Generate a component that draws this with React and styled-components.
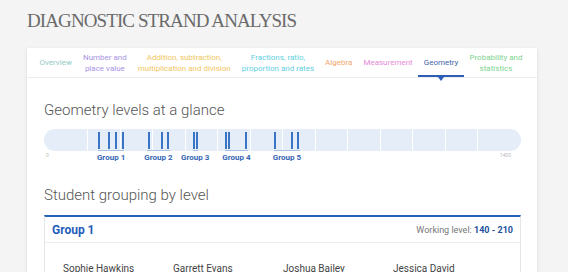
import React from 'react';
import styled, { createGlobalStyle } from 'styled-components';

const GlobalStyle = createGlobalStyle`
  body {
    margin: 0;
    background: #f4f4f4;
    font-family: Roboto, "Liberation Sans", sans-serif;
  }
`;

const tabs = [
  { lines: ['Overview'], color: '#93cbc5' },
  { lines: ['Number and', 'place value'], color: '#a893e4' },
  { lines: ['Addition, subtraction,', 'multiplication and division'], color: '#f0c65e' },
  { lines: ['Fractions, ratio,', 'proportion and rates'], color: '#62cfe2' },
  { lines: ['Algebra'], color: '#f4a66c' },
  { lines: ['Measurement'], color: '#e68bd8' },
  { lines: ['Geometry'], color: '#4565ab', active: true },
  { lines: ['Probability and', 'statistics'], color: '#80d48f' },
];

const groups = [
  { name: 'Group 1', from: 131, to: 211, ticks: [135, 165, 186, 207] },
  { name: 'Group 2', from: 282, to: 352, ticks: [288, 328, 346] },
  { name: 'Group 3', from: 423, to: 437, ticks: [426, 435] },
  { name: 'Group 4', from: 522, to: 592, ticks: [525, 535, 586] },
  { name: 'Group 5', from: 672, to: 752, ticks: [675, 727, 746] },
];

const students = ['Sophie Hawkins', 'Garrett Evans', 'Joshua Bailey', 'Jessica David'];

// bar is 477px wide, scale 0..1400 runs between the rounded caps
const pos = (v) => 11.5 + (v / 1400) * 455;

const App = () => (
  <Page>
    <GlobalStyle />
    <Title>DIAGNOSTIC STRAND ANALYSIS</Title>
    <Card>
      <TabRow>
        {tabs.map((t) => (
          <Tab key={t.lines[0]} color={t.color} $active={t.active}>
            <span>
              {t.lines.map((l, i) => (
                <React.Fragment key={l}>
                  {i > 0 && <br />}
                  {l}
                </React.Fragment>
              ))}
            </span>
          </Tab>
        ))}
      </TabRow>

      <Content>
        <SectionHeading>Geometry levels at a glance</SectionHeading>
        <Chart>
          <Bar>
            {Array.from({ length: 14 }).map((_, i) => (
              <Cell key={i} />
            ))}
            {groups.map((g) => (
              <React.Fragment key={g.name}>
                <Range style={{ left: pos(g.from), width: pos(g.to) - pos(g.from) }} />
                {g.ticks.map((v) => (
                  <Tick key={v} style={{ left: pos(v) - 1 }} />
                ))}
              </React.Fragment>
            ))}
          </Bar>
          <Scale>
            <AxisLabel>0</AxisLabel>
            <AxisLabel $end>1400</AxisLabel>
            {groups.map((g) => (
              <GroupLabel key={g.name} style={{ left: (pos(g.from) + pos(g.to)) / 2 }}>
                {g.name}
              </GroupLabel>
            ))}
          </Scale>
        </Chart>

        <SectionHeading $spaced>Student grouping by level</SectionHeading>
        <GroupBox>
          <GroupHeader>
            <GroupName>Group 1</GroupName>
            <Level>
              Working level: <strong>140 - 210</strong>
            </Level>
          </GroupHeader>
          <Names>
            {students.map((s) => (
              <Name key={s}>{s}</Name>
            ))}
          </Names>
        </GroupBox>
      </Content>
    </Card>
  </Page>
);

const Page = styled.div`
  padding: 9px 31px 0 27px;
`;

const Title = styled.h1`
  margin: 0 0 15px;
  font-family: "Liberation Serif", serif;
  font-weight: 400;
  font-size: 19px;
  line-height: 24px;
  letter-spacing: -0.9px;
  color: #6a6a6a;
`;

const Card = styled.div`
  background: #fff;
  box-shadow: 0 1px 3px rgba(0, 0, 0, 0.12);
  height: 400px;
`;

const TabRow = styled.div`
  display: flex;
  height: 29px;
  padding: 0 7px;
  border-bottom: 1px solid #ececec;
`;

const Tab = styled.div`
  position: relative;
  display: flex;
  align-items: center;
  padding: 0 5.5px;
  font-size: 8px;
  line-height: 11px;
  text-align: center;
  white-space: nowrap;
  color: ${(p) => p.color};

  ${(p) =>
    p.$active &&
    `
    &::before {
      content: '';
      position: absolute;
      left: 0;
      right: 0;
      bottom: 0;
      height: 2px;
      background: #2a5fb5;
    }
    &::after {
      content: '';
      position: absolute;
      left: 50%;
      bottom: -4px;
      margin-left: -3px;
      border-left: 3px solid transparent;
      border-right: 3px solid transparent;
      border-top: 4px solid #2a5fb5;
    }
  `}
`;

const Content = styled.div`
  padding: 0 16px 0 17px;
`;

const SectionHeading = styled.h2`
  margin: ${(p) => (p.$spaced ? '21px 0 11px' : '23px 0 10px')};
  font-size: 15px;
  line-height: 18px;
  font-weight: 300;
  color: #555;
`;

const Chart = styled.div``;

const Bar = styled.div`
  position: relative;
  display: flex;
  height: 22px;
  padding: 0 11.5px;
  border-radius: 11px;
  background: #e4edf8;
  box-sizing: border-box;
`;

const Cell = styled.div`
  flex: 1;
  & + & {
    border-left: 1px solid #fff;
  }
`;

const Tick = styled.div`
  position: absolute;
  top: 3px;
  width: 2px;
  height: 17px;
  background: #3a74c4;
`;

const Range = styled.div`
  position: absolute;
  bottom: 0;
  height: 1px;
  background: #a6c1e6;
`;

const Scale = styled.div`
  position: relative;
  height: 14px;
`;

const AxisLabel = styled.span`
  position: absolute;
  top: 1px;
  ${(p) => (p.$end ? 'right: 10px;' : 'left: 2px;')}
  font-size: 5px;
  color: #bbb;
`;

const GroupLabel = styled.span`
  position: absolute;
  top: 2px;
  transform: translateX(-50%);
  font-size: 8px;
  line-height: 10px;
  font-weight: 700;
  white-space: nowrap;
  color: #3465b3;
`;

const GroupBox = styled.div`
  border: 1px solid #e6e6e6;
  border-top: 2px solid #2462b8;
`;

const GroupHeader = styled.div`
  display: flex;
  align-items: center;
  justify-content: space-between;
  height: 25px;
  padding: 0 7px;
  border-bottom: 1px solid #ececec;
`;

const GroupName = styled.span`
  font-size: 12px;
  font-weight: 700;
  color: #1f5dbb;
`;

const Level = styled.span`
  font-size: 9px;
  color: #777;

  strong {
    color: #23509e;
  }
`;

const Names = styled.div`
  display: grid;
  grid-template-columns: repeat(4, 110px);
  padding: 20px 0 0 18px;
`;

const Name = styled.span`
  font-size: 10px;
  line-height: 12px;
  color: #444;
`;

export default App;
